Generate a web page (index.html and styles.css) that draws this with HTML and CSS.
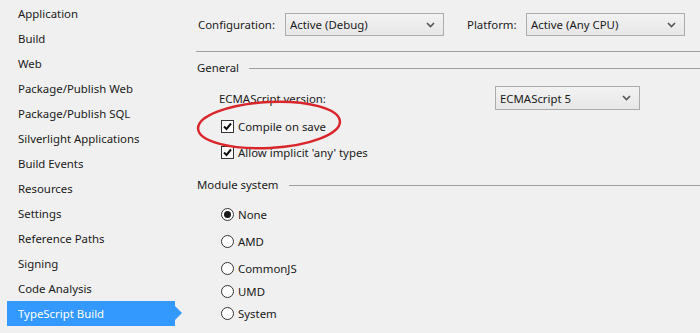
FILE: index.html
```html
<!DOCTYPE html>
<html lang="en">
<head>
    <meta charset="UTF-8">
    <title>TypeScript Build</title>
    <link rel="stylesheet" href="styles.css">
</head>
<body>
    <div class="page">
        <nav class="sidebar">
            <div class="nav-item">Application</div>
            <div class="nav-item">Build</div>
            <div class="nav-item">Web</div>
            <div class="nav-item">Package/Publish Web</div>
            <div class="nav-item">Package/Publish SQL</div>
            <div class="nav-item">Silverlight Applications</div>
            <div class="nav-item">Build Events</div>
            <div class="nav-item">Resources</div>
            <div class="nav-item">Settings</div>
            <div class="nav-item">Reference Paths</div>
            <div class="nav-item">Signing</div>
            <div class="nav-item">Code Analysis</div>
            <div class="nav-item selected">TypeScript Build</div>
        </nav>

        <main class="content">
            <div class="config-bar">
                <span class="label">Configuration:</span>
                <div class="dropdown config-select">
                    <span>Active (Debug)</span>
                    <svg class="chevron" width="9" height="6" viewBox="0 0 9 6"><path d="M1 1 L4.5 4.5 L8 1" fill="none" stroke="#555" stroke-width="1.6"/></svg>
                </div>
                <span class="label platform-label">Platform:</span>
                <div class="dropdown config-select">
                    <span>Active (Any CPU)</span>
                    <svg class="chevron" width="9" height="6" viewBox="0 0 9 6"><path d="M1 1 L4.5 4.5 L8 1" fill="none" stroke="#555" stroke-width="1.6"/></svg>
                </div>
            </div>
            <div class="rule"></div>

            <div class="group-title"><span>General</span><div class="group-line"></div></div>
            <div class="field-row">
                <span class="field-label">ECMAScript version:</span>
                <div class="dropdown ecma-select">
                    <span>ECMAScript 5</span>
                    <svg class="chevron" width="9" height="6" viewBox="0 0 9 6"><path d="M1 1 L4.5 4.5 L8 1" fill="none" stroke="#555" stroke-width="1.6"/></svg>
                </div>
            </div>
            <div class="option check-row first-check">
                <span class="checkbox"><svg width="11" height="11" viewBox="0 0 11 11"><path d="M2 5.5 L4.5 8 L9 2.5" fill="none" stroke="#111" stroke-width="2"/></svg></span>
                <span>Compile on save</span>
            </div>
            <div class="option check-row">
                <span class="checkbox"><svg width="11" height="11" viewBox="0 0 11 11"><path d="M2 5.5 L4.5 8 L9 2.5" fill="none" stroke="#111" stroke-width="2"/></svg></span>
                <span>Allow implicit 'any' types</span>
            </div>

            <div class="group-title module-title"><span>Module system</span><div class="group-line"></div></div>
            <div class="option radio-row r-none"><span class="radio checked"></span><span>None</span></div>
            <div class="option radio-row r-amd"><span class="radio"></span><span>AMD</span></div>
            <div class="option radio-row r-common"><span class="radio"></span><span>CommonJS</span></div>
            <div class="option radio-row r-umd"><span class="radio"></span><span>UMD</span></div>
            <div class="option radio-row r-system"><span class="radio"></span><span>System</span></div>

            <!-- red highlight drawn over the checkbox -->
            <svg class="highlight" width="160" height="56" viewBox="0 0 160 56">
                <ellipse cx="80" cy="28" rx="71" ry="23" fill="none" stroke="#d8262b" stroke-width="2.5" transform="rotate(-3 80 28)"/>
            </svg>
        </main>
    </div>
</body>
</html>
```

FILE: styles.css
```css
/* Project properties page */
body {
    margin: 0;
    background-color: #f0f0f0;
    color: #1a1a1a;
    font-family: "Noto Sans", "Open Sans", sans-serif;
    font-size: 11.4px;
}

.page {
    display: flex;
    width: 700px;
    height: 333px;
    overflow: hidden;
}

.sidebar {
    width: 175px;
    padding-top: 1px;
    flex-shrink: 0;
}

.nav-item {
    height: 25px;
    line-height: 25px;
    padding-left: 11px;
    margin-left: 7px;
    white-space: nowrap;
}

.nav-item.selected {
    position: relative;
    background-color: #3399ff;
    color: white;
}

.nav-item.selected::after {
    content: "";
    position: absolute;
    right: -7px;
    top: 5px;
    border-left: 7px solid #3399ff;
    border-top: 7px solid transparent;
    border-bottom: 7px solid transparent;
}

.content {
    position: relative;
    flex: 1;
    padding-left: 21px;
}

.config-bar {
    display: flex;
    align-items: center;
    margin-top: 13px;
    padding-left: 2px;
}

.label {
    margin-right: 7px;
    width: 80px;
}

.platform-label {
    margin-left: 23px;
    width: 52px;
}

.dropdown {
    display: flex;
    align-items: center;
    justify-content: space-between;
    box-sizing: border-box;
    border: 1px solid #acacac;
    background: linear-gradient(#f2f2f2, #e7e7e7);
    padding: 0 8px 0 4px;
}

.config-select {
    width: 159px;
    height: 23px;
}

.chevron {
    display: block;
}

.rule {
    height: 1px;
    background-color: #a0a0a0;
    margin-top: 15px;
}

.group-title {
    display: flex;
    align-items: center;
    margin-top: 6px;
    height: 18px;
    padding-left: 1px;
}

.group-title span {
    margin-right: 10px;
}

.group-line {
    flex: 1;
    height: 1px;
    margin-top: 2px;
    background-color: #a0a0a0;
}

.field-row {
    display: flex;
    align-items: center;
    margin-top: 10px;
    padding-left: 23px;
}

.field-label {
    width: 276px;
}

.ecma-select {
    width: 145px;
    height: 24px;
}

.option {
    display: flex;
    align-items: center;
    height: 18px;
    padding-left: 25px;
}

.option span:last-child {
    margin-left: 4px;
}

.checkbox {
    display: flex;
    align-items: center;
    justify-content: center;
    width: 13px;
    height: 13px;
    box-sizing: border-box;
    border: 1px solid #333;
    background-color: white;
}

.first-check {
    margin-top: 7px;
}

.check-row + .check-row {
    margin-top: 8px;
}

.module-title {
    margin-top: 14px;
}

.radio {
    display: flex;
    align-items: center;
    justify-content: center;
    width: 13px;
    height: 13px;
    box-sizing: border-box;
    border: 1px solid #333;
    border-radius: 50%;
    background-color: white;
}

.radio.checked::after {
    content: "";
    width: 7px;
    height: 7px;
    border-radius: 50%;
    background-color: #1a1a1a;
}

.r-none { margin-top: 12px; }
.r-amd { margin-top: 9px; }
.r-common { margin-top: 9px; }
.r-umd { margin-top: 5px; }
.r-system { margin-top: 4px; }

.highlight {
    position: absolute;
    left: 14px;
    top: 97px;
}
```
